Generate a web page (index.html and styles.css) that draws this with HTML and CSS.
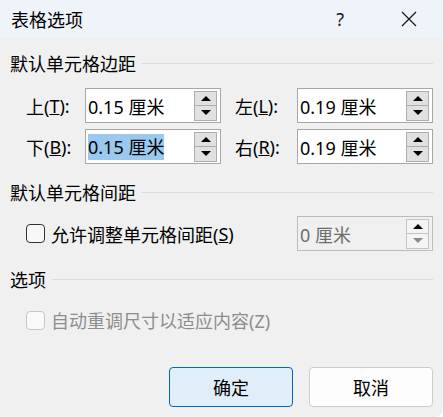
FILE: index.html
```html
<!DOCTYPE html>
<html>
<head>
    <title>表格选项</title>
    <link rel="stylesheet" href="styles.css">
</head>
<body>
    <div class="dialog">
        <div class="titlebar">
            <span class="title">表格选项</span>
            <span class="help">?</span>
            <span class="close">
                <svg width="16" height="16" viewBox="0 0 16 16">
                    <path d="M1 1 L15 15 M15 1 L1 15" stroke="#1a1a1a" stroke-width="1.3" fill="none"/>
                </svg>
            </span>
        </div>

        <div class="content">
            <div class="group-head"><span>默认单元格边距</span><span class="rule"></span></div>
            <div class="margins">
                <label class="field-label">上(<u>T</u>):</label>
                <div class="spin-box">
                    <span class="value">0.15 厘米</span>
                    <div class="spin"><span class="up"></span><span class="down"></span></div>
                </div>
                <label class="field-label right-col">左(<u>L</u>):</label>
                <div class="spin-box">
                    <span class="value">0.19 厘米</span>
                    <div class="spin"><span class="up"></span><span class="down"></span></div>
                </div>
                <label class="field-label">下(<u>B</u>):</label>
                <div class="spin-box">
                    <span class="value selected">0.15 厘米</span>
                    <div class="spin"><span class="up"></span><span class="down"></span></div>
                </div>
                <label class="field-label right-col">右(<u>R</u>):</label>
                <div class="spin-box">
                    <span class="value">0.19 厘米</span>
                    <div class="spin"><span class="up"></span><span class="down"></span></div>
                </div>
            </div>

            <div class="group-head second"><span>默认单元格间距</span><span class="rule"></span></div>
            <div class="spacing-row">
                <label class="check"><span class="box"></span>允许调整单元格间距(<u>S</u>)</label>
                <div class="spin-box disabled">
                    <span class="value">0 厘米</span>
                    <div class="spin"><span class="up"></span><span class="down"></span></div>
                </div>
            </div>

            <div class="group-head third"><span>选项</span><span class="rule"></span></div>
            <div class="option-row">
                <label class="check off"><span class="box"></span>自动重调尺寸以适应内容(Z)</label>
            </div>

            <div class="buttons">
                <button class="btn primary">确定</button>
                <button class="btn">取消</button>
            </div>
        </div>
    </div>
</body>
</html>
```

FILE: styles.css
```css
html {
    background-color: #ffffff;
}

body {
    margin: 0;
    font-family: "Noto Sans", "Noto Sans CJK SC", sans-serif;
    font-size: 18px;
    color: #000;
}

.dialog {
    width: 443px;
    height: 417px;
    background-color: #f0f0f0;
    border-bottom-right-radius: 8px;
    overflow: hidden;
}

.titlebar {
    height: 38px;
    background-color: #eff3fa;
    display: flex;
    align-items: center;
}

.title {
    margin-left: 11px;
    font-size: 18px;
    flex: 1;
}

.help {
    font-size: 18px;
    color: #1a1a1a;
    margin-right: 57px;
}

.close {
    display: flex;
    margin-right: 26px;
}

.content {
    padding: 13px 10px 0 10px;
}

.group-head {
    display: flex;
    align-items: center;
    height: 24px;
}

.group-head .rule {
    flex: 1;
    height: 1px;
    background-color: #dadada;
    margin-left: 6px;
}

.group-head.second {
    margin-top: 16px;
}

.group-head.third {
    margin-top: 16px;
}

.margins {
    display: grid;
    grid-template-columns: 59px 136px 76px 136px;
    row-gap: 6px;
    margin: 13px 0 0 16px;
}

.field-label {
    display: flex;
    align-items: center;
}

.field-label.right-col {
    padding-left: 14px;
}

.spin-box {
    height: 35px;
    box-sizing: border-box;
    border: 1px solid #a7a7a7;
    background-color: #fff;
    display: flex;
    align-items: center;
    padding: 0 3px 0 2px;
}

.spin-box .value {
    flex: 1;
    white-space: nowrap;
}

.spin-box .selected {
    flex: none;
    background-color: #99c9ef;
    margin-right: auto;
    line-height: 26px;
}

.spin {
    display: flex;
    flex-direction: column;
    width: 23px;
}

.spin span {
    height: 15px;
    box-sizing: border-box;
    border: 1px solid #adadad;
    background-color: #e1e1e1;
    display: flex;
    align-items: center;
    justify-content: center;
}

.spin .down {
    border-top: none;
}

.spin .up::after {
    content: "";
    border-left: 5px solid transparent;
    border-right: 5px solid transparent;
    border-bottom: 5px solid #000;
}

.spin .down::after {
    content: "";
    border-left: 5px solid transparent;
    border-right: 5px solid transparent;
    border-top: 5px solid #000;
}

.spin-box.disabled {
    background-color: #f0f0f0;
    border-color: #bcbcbc;
}

.spin-box.disabled .value {
    color: #6d6d6d;
}

.spin-box.disabled .spin span {
    background-color: #f4f4f4;
    border-color: #c4c4c4;
}

.spin-box.disabled .spin .down::after {
    border-top-color: #8a8a8a;
}

.spacing-row {
    display: flex;
    align-items: center;
    justify-content: space-between;
    margin: 12px 0 0 16px;
}

.spacing-row .spin-box {
    width: 136px;
}

.check {
    display: flex;
    align-items: center;
}

.check .box {
    width: 19px;
    height: 19px;
    box-sizing: border-box;
    border: 1px solid #333;
    border-radius: 4px;
    background-color: #f8f8f8;
    margin-right: 6px;
}

.check.off {
    color: #8d8d8d;
}

.check.off .box {
    border-color: #c6c6c6;
    background-color: #f9f9f9;
}

.option-row {
    margin: 16px 0 0 16px;
}

.buttons {
    display: flex;
    justify-content: flex-end;
    gap: 16px;
    margin-top: 34px;
}

.btn {
    width: 124px;
    height: 40px;
    font-family: "Noto Sans", "Noto Sans CJK SC", sans-serif;
    font-size: 18px;
    background-color: #fdfdfd;
    border: 1px solid #cccccc;
    border-radius: 4px;
    color: #000;
}

.btn.primary {
    background-color: #e0eef9;
    border-color: #0067c0;
}
```
